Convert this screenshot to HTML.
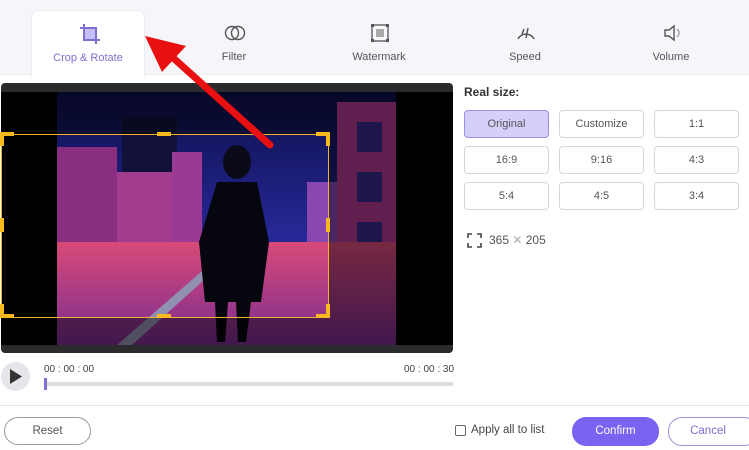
<!DOCTYPE html>
<html><head><meta charset="utf-8"><style>
*{margin:0;padding:0;box-sizing:border-box}
body{width:749px;height:450px;overflow:hidden;background:#fff;font-family:"Liberation Sans",sans-serif;position:relative}
.top{position:absolute;left:0;top:0;width:749px;height:75px;background:#f6f6fa;border-bottom:1px solid #ececf2}
.tab{position:absolute;top:10px;height:66px;width:114px;text-align:center;font-size:11px;color:#555}
.tab.act{background:#fff;border-radius:8px 8px 0 0;border:1px solid #eceaf2;border-bottom:none;color:#7b6fd0}
.tab svg{position:absolute;left:47px;top:12px}
.tab span{position:absolute;left:0;right:0;top:41px}
.abs{position:absolute}
.btn{position:absolute;width:85px;height:28px;border:1px solid #d6d6dc;border-radius:4px;font-size:11px;color:#555;text-align:center;line-height:26px;background:#fff}
.btn.sel{background:#d4d0fa;border-color:#9b90e8;color:#555}
</style></head><body>
<div class="top"></div>
<div class="tab act" style="left:31px"><svg width="22" height="22" viewBox="0 0 22 22"><rect x="6" y="6" width="11" height="11" fill="#c5bff5"/><path d="M5 1v16h16M1 5h16v16" fill="none" stroke="#7b6fd0" stroke-width="2"/></svg><span>Crop &amp; Rotate</span></div>
<div class="tab" style="left:177px"><svg width="22" height="22" viewBox="0 0 22 22"><circle cx="8" cy="11" r="6.5" fill="none" stroke="#555" stroke-width="1.4"/><circle cx="14" cy="11" r="6.5" fill="none" stroke="#555" stroke-width="1.4"/></svg><span>Filter</span></div>
<div class="tab" style="left:322px"><svg width="22" height="22" viewBox="0 0 22 22"><rect x="3" y="3" width="16" height="16" fill="none" stroke="#555" stroke-width="1.3"/><rect x="7" y="7" width="8" height="8" fill="#aaa"/><rect x="2" y="2" width="3" height="3" fill="#555"/><rect x="17" y="2" width="3" height="3" fill="#555"/><rect x="2" y="17" width="3" height="3" fill="#555"/><rect x="17" y="17" width="3" height="3" fill="#555"/></svg><span>Watermark</span></div>
<div class="tab" style="left:468px"><svg width="22" height="22" viewBox="0 0 22 22"><path d="M3 17A9 9 0 0 1 19 17M9 7l-2 5M13 6l-2 10" fill="none" stroke="#555" stroke-width="1.5"/></svg><span>Speed</span></div>
<div class="tab" style="left:614px"><svg width="22" height="22" viewBox="0 0 22 22"><path d="M4 8h4l5-4v14l-5-4H4z" fill="none" stroke="#555" stroke-width="1.4"/><path d="M16 7a5 5 0 0 1 0 8" fill="none" stroke="#999" stroke-width="1.3"/></svg><span>Volume</span></div>

<div class="abs" style="left:1px;top:83px;width:452px;height:270px;background:#2b2b2d;border-radius:4px"></div>
<div class="abs" style="left:1px;top:92px;width:452px;height:253px;background:#000"></div>
<svg class="abs" style="left:57px;top:92px" width="339" height="253" viewBox="0 0 339 253">
<defs><linearGradient id="sky" x1="0" y1="0" x2="0" y2="1"><stop offset="0" stop-color="#0d0f4a"/><stop offset="1" stop-color="#3a3bd0"/></linearGradient>
<linearGradient id="rd" x1="0" y1="0" x2="0" y2="1"><stop offset="0" stop-color="#d84a78"/><stop offset="1" stop-color="#7a2c90"/></linearGradient></defs>
<rect width="339" height="253" fill="url(#sky)"/>
<rect x="65" y="25" width="55" height="140" fill="#12113a"/>
<rect x="0" y="55" width="60" height="120" fill="#8a2e80"/>
<rect x="60" y="80" width="55" height="95" fill="#a23c8c"/>
<rect x="115" y="60" width="30" height="110" fill="#9a3a94"/>
<rect x="250" y="90" width="40" height="90" fill="#8848b0"/>
<rect x="280" y="10" width="59" height="200" fill="#b03a8e"/>
<rect x="300" y="30" width="25" height="30" fill="#3a2a8a"/><rect x="300" y="80" width="25" height="30" fill="#3a2a8a"/><rect x="300" y="130" width="25" height="30" fill="#3a2a8a"/>
<polygon points="0,150 339,150 339,253 0,253" fill="url(#rd)"/>
<polygon points="60,253 75,253 200,140 190,140" fill="#9090b0"/>
<ellipse cx="180" cy="70" rx="14" ry="17" fill="#0a0a18"/>
<path d="M160 90h40l12 60-8 60h-10l-5 40h-8l-2-40h-8l-3 40h-8l-2-40h-10l-6-60z" fill="#06060e"/>
</svg>
<div class="abs" style="left:1px;top:92px;width:452px;height:42px;background:rgba(0,0,0,.45)"></div>
<div class="abs" style="left:1px;top:318px;width:452px;height:27px;background:rgba(0,0,0,.45)"></div>
<div class="abs" style="left:329px;top:134px;width:124px;height:184px;background:rgba(0,0,0,.45)"></div>
<div class="abs" style="left:1px;top:134px;width:328px;height:184px;border:1px solid #f0b030"></div>
<svg class="abs" style="left:0;top:132px" width="332" height="188"><g fill="#f8b820">
<rect x="0" y="0" width="14" height="4"/><rect x="0" y="0" width="4" height="14"/>
<rect x="316" y="0" width="14" height="4"/><rect x="326" y="0" width="4" height="14"/>
<rect x="0" y="182" width="14" height="4"/><rect x="0" y="172" width="4" height="14"/>
<rect x="316" y="182" width="14" height="4"/><rect x="326" y="172" width="4" height="14"/>
<rect x="157" y="0" width="14" height="4"/><rect x="157" y="182" width="14" height="4"/>
<rect x="0" y="86" width="4" height="14"/><rect x="326" y="86" width="4" height="14"/></g></svg>

<svg class="abs" style="left:0;top:0" width="300" height="160"><path d="M270 145L170 55" stroke="#e81010" stroke-width="7" stroke-linecap="round"/><polygon points="145,36 186,46 162,72" fill="#e81010"/></svg>

<div class="abs" style="left:1px;top:362px;width:29px;height:29px;border-radius:50%;background:#e6e6ea"></div>
<svg class="abs" style="left:9px;top:368px" width="14" height="17"><polygon points="1,1 13,8.5 1,16" fill="#333"/></svg>
<div class="abs" style="left:44px;top:364px;font-size:10px;color:#444">00 : 00 : 00</div>
<div class="abs" style="left:404px;top:364px;font-size:10px;color:#444">00 : 00 : 30</div>
<div class="abs" style="left:45px;top:382px;width:408px;height:4px;background:#ddd"></div>
<div class="abs" style="left:44px;top:378px;width:3px;height:12px;background:#7b6fd0"></div>

<div class="abs" style="left:464px;top:85px;font-size:12px;font-weight:bold;color:#333">Real size:</div>
<div class="btn sel" style="left:464px;top:110px">Original</div>
<div class="btn" style="left:559px;top:110px">Customize</div>
<div class="btn" style="left:654px;top:110px">1:1</div>
<div class="btn" style="left:464px;top:146px">16:9</div>
<div class="btn" style="left:559px;top:146px">9:16</div>
<div class="btn" style="left:654px;top:146px">4:3</div>
<div class="btn" style="left:464px;top:182px">5:4</div>
<div class="btn" style="left:559px;top:182px">4:5</div>
<div class="btn" style="left:654px;top:182px">3:4</div>
<svg class="abs" style="left:467px;top:233px" width="15" height="15"><path d="M1 5V1h4M10 1h4v4M14 10v4h-4M5 14H1v-4" fill="none" stroke="#444" stroke-width="1.6"/></svg>
<div class="abs" style="left:489px;top:233px;font-size:12px;color:#555">365 <span style="color:#aaa">✕</span> 205</div>

<div class="abs" style="left:0;top:405px;width:749px;height:1px;background:#e6e4ee"></div>
<div class="abs" style="left:4px;top:417px;width:87px;height:28px;border:1px solid #999;border-radius:14px;text-align:center;line-height:26px;font-size:11.5px;color:#555">Reset</div>
<div class="abs" style="left:455px;top:425px;width:11px;height:11px;border:1px solid #666;border-radius:2px"></div>
<div class="abs" style="left:471px;top:424px;font-size:11.5px;color:#444">Apply all to list</div>
<div class="abs" style="left:572px;top:417px;width:87px;height:29px;background:#7a63f0;border-radius:14px;text-align:center;line-height:29px;font-size:11.5px;color:#fff">Confirm</div>
<div class="abs" style="left:668px;top:417px;width:90px;height:29px;border:1px solid #9a90d8;border-radius:14px;text-align:center;line-height:27px;font-size:11.5px;color:#7b6fd0;padding-right:10px">Cancel</div>
</body></html>
